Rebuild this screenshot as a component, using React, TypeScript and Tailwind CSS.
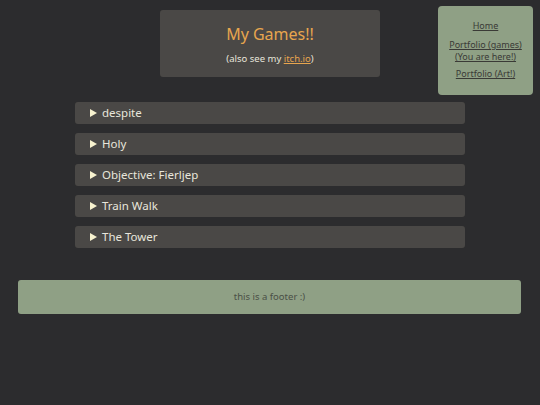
const games = ["despite", "Holy", "Objective: Fierljep", "Train Walk", "The Tower"];

function NavBox() {
  return (
    <nav className="mr-[7px] mt-[6px] flex h-[89px] w-[95px] flex-col items-center justify-self-end rounded-[4px] bg-[#8fa085] pt-[14px] text-center text-[9px] leading-[12px] text-[#3a3a36]">
      <a href="#" className="underline">Home</a>
      <a href="#" className="mt-[7px] flex flex-col underline">
        <span>Portfolio (games)</span>
        <span>(You are here!)</span>
      </a>
      <a href="#" className="mt-[5px] underline">Portfolio (Art!)</a>
    </nav>
  );
}

function GameRow({ name }: { name: string }) {
  return (
    <details className="rounded-[3px] bg-[#4a4846]">
      <summary className="flex h-[22px] cursor-pointer list-none items-center pl-[15px] text-[11.5px] text-[#e8e6dc]">
        <svg width="7" height="8" viewBox="0 0 7 8" className="mr-[5px]">
          <path d="M0 0 L7 4 L0 8 Z" fill="#f7f2cf" />
        </svg>
        {name}
      </summary>
    </details>
  );
}

export default function App() {
  return (
    <div className="min-h-[405px] bg-[#2c2c2e]" style={{ fontFamily: '"Noto Sans", "Open Sans", sans-serif' }}>
      <div className="grid grid-cols-[1fr_220px_1fr] items-start">
        <div />
        <header className="mt-[10px] flex h-[67px] flex-col items-center rounded-[3px] bg-[#4a4846] pt-[13px]">
          <h1 className="text-[16px] leading-[22px] text-[#e7a54e]">My Games!!</h1>
          <p className="mt-[7px] text-[9.5px] text-[#e8e6dc]">
            (also see my <a href="#" className="text-[#e7a54e] underline">itch.io</a>)
          </p>
        </header>
        <NavBox />
      </div>

      <main className="mx-auto mt-[7px] flex w-[390px] flex-col gap-[9px]">
        {games.map((g) => (
          <GameRow key={g} name={g} />
        ))}
      </main>

      <footer className="ml-[18px] mr-[19px] mt-[32px] flex h-[34px] items-center justify-center rounded-[3px] bg-[#8fa085] text-[9.5px] text-[#4a4f46]">
        this is a footer :)
      </footer>
    </div>
  );
}
